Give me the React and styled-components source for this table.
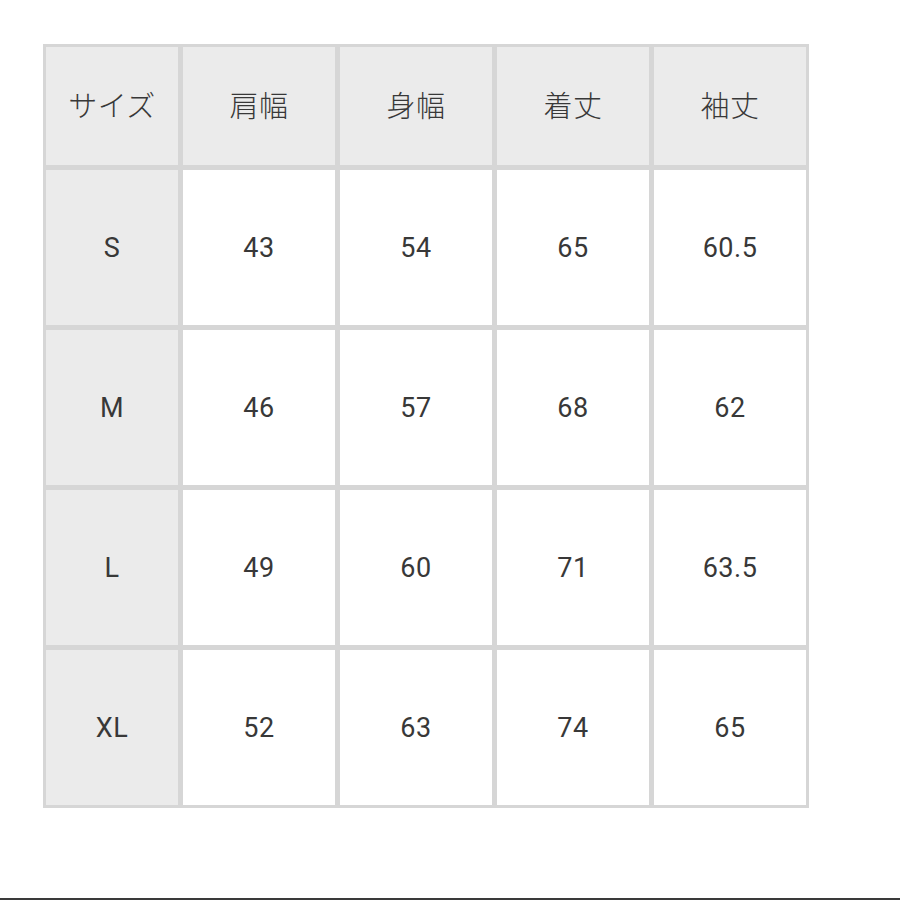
import React from 'react';
import styled, { createGlobalStyle } from 'styled-components';

const GlobalStyle = createGlobalStyle`
  html, body {
    margin: 0;
    padding: 0;
    background: #ffffff;
  }
`;

const Page = styled.div`
  display: flex;
  flex-direction: column;
  min-height: 900px;
  box-sizing: border-box;
  padding: 44px 0 0 43px;
  font-family: Roboto, "Noto Sans CJK JP", sans-serif;
`;

const Table = styled.div`
  display: grid;
  grid-template-columns: 132px repeat(4, 152px);
  grid-template-rows: 118px repeat(4, 155px);
  gap: 5px;
  padding: 3px;
  width: max-content;
  background: #d6d6d6;
`;

const Cell = styled.div`
  display: flex;
  align-items: center;
  justify-content: center;
  background: ${(p) => (p.$shade ? '#ebebeb' : '#ffffff')};
  color: #383838;
  font-size: 27px;
  letter-spacing: 0.5px;
`;

const HeadCell = styled(Cell)`
  font-family: "Noto Sans CJK JP", sans-serif;
  font-size: 29px;
  font-weight: 300;
  letter-spacing: 0.5px;
  padding-bottom: 4px;
`;

const BottomLine = styled.div`
  margin-top: auto;
  margin-left: -43px;
  height: 2px;
  background: #3a3a3a;
`;

const header = ['サイズ', '肩幅', '身幅', '着丈', '袖丈'];
const rows = [
  ['S', '43', '54', '65', '60.5'],
  ['M', '46', '57', '68', '62'],
  ['L', '49', '60', '71', '63.5'],
  ['XL', '52', '63', '74', '65'],
];

export default function App() {
  return (
    <>
      <GlobalStyle />
      <Page>
        <Table>
          {header.map((h) => (
            <HeadCell key={h} $shade>{h}</HeadCell>
          ))}
          {rows.map((row) =>
            row.map((v, i) => (
              <Cell key={row[0] + i} $shade={i === 0}>{v}</Cell>
            ))
          )}
        </Table>
        <BottomLine />
      </Page>
    </>
  );
}
